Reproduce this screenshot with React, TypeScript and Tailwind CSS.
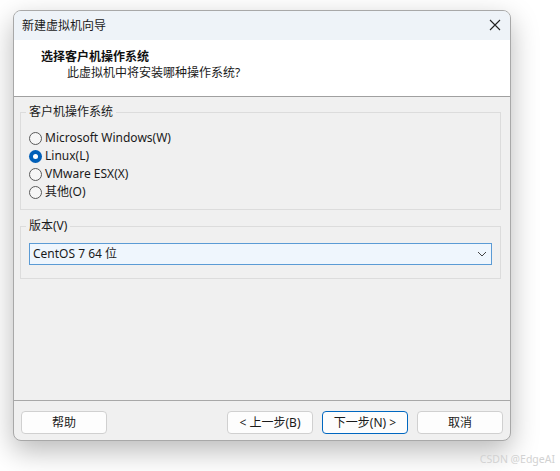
import React from "react";

const FONT = {
  fontFamily: '"Noto Sans", "Noto Sans CJK SC", sans-serif',
};

function Radio({ label, checked }: { label: string; checked?: boolean }) {
  return (
    <label className="flex h-[18px] items-center">
      {checked ? (
        <span className="flex h-[13px] w-[13px] items-center justify-center rounded-full bg-[#005fb8]">
          <span className="h-[5px] w-[5px] rounded-full bg-white" />
        </span>
      ) : (
        <span className="h-[13px] w-[13px] rounded-full border border-[#5a5a5a] bg-[#f6f6f6]" />
      )}
      <span className="ml-[3px] text-[12px] leading-[14px] text-[#1a1a1a]">{label}</span>
    </label>
  );
}

function Btn({ children, primary }: { children: React.ReactNode; primary?: boolean }) {
  return (
    <button
      className={`flex h-[23px] w-[86px] items-center justify-center rounded-[4px] border bg-[#fdfdfd] text-[12px] text-[#1a1a1a] ${
        primary ? "border-[#0067c0]" : "border-[#d0d0d0]"
      }`}
    >
      {children}
    </button>
  );
}

export default function App() {
  return (
    <div className="relative h-[471px] w-[560px] overflow-hidden bg-white" style={FONT}>
      <div className="pl-[13px] pt-[10px]">
        <div className="flex h-[431px] w-[498px] flex-col overflow-hidden rounded-[8px] border border-[#a8a8a8] bg-[#f0f0f0] shadow-[0_10px_28px_rgba(0,0,0,0.28)]">
          {/* Title bar */}
          <div className="flex h-[29px] shrink-0 items-center justify-between bg-[#eef3f8] pl-[8px] pr-[9px]">
            <span className="text-[12px] text-[#1a1a1a]">新建虚拟机向导</span>
            <svg width="12" height="12" viewBox="0 0 12 12" className="mt-[-1px]">
              <path d="M1 1L11 11M11 1L1 11" stroke="#222" strokeWidth="1.1" />
            </svg>
          </div>

          {/* Header */}
          <div className="flex h-[57px] shrink-0 flex-col border-b border-[#a0a0a0] bg-white pl-[27px] pt-[9px]">
            <span className="text-[12px] font-bold leading-[16px] text-[#111]">选择客户机操作系统</span>
            <span className="ml-[26px] text-[12px] leading-[16px] text-[#1a1a1a]">
              此虚拟机中将安装哪种操作系统?
            </span>
          </div>

          {/* Body */}
          <div className="flex flex-1 flex-col pl-[6px] pr-[9px]">
            <fieldset className="mt-[8px] border border-[#dcdcdc] pb-[8px] pl-[8px] pt-[10px]">
              <legend className="ml-[-3px] px-[3px] text-[12px] leading-[14px] text-[#1a1a1a]">客户机操作系统</legend>
              <Radio label="Microsoft Windows(W)" />
              <Radio label="Linux(L)" checked />
              <Radio label="VMware ESX(X)" />
              <Radio label="其他(O)" />
            </fieldset>

            <fieldset className="mt-[9px] border border-[#dcdcdc] px-[8px] pb-[13px] pt-[10px]">
              <legend className="ml-[-3px] px-[3px] text-[12px] leading-[14px] text-[#1a1a1a]">版本(V)</legend>
              <div className="flex h-[22px] items-center justify-between border border-[#5b9bd5] bg-[#eff6fd] pl-[3px] pr-[4px]">
                <span className="text-[12px] text-[#1a1a1a]">CentOS 7 64 位</span>
                <svg width="10" height="6" viewBox="0 0 10 6">
                  <path d="M1 1L5 5L9 1" stroke="#444" strokeWidth="1" fill="none" />
                </svg>
              </div>
            </fieldset>
          </div>

          {/* Footer */}
          <div className="flex h-[40px] shrink-0 items-start border-t border-[#a8a8a8] px-[7px] pt-[10px]">
            <Btn>帮助</Btn>
            <div className="flex-1" />
            <div className="flex gap-[9px]">
              <Btn>&lt; 上一步(B)</Btn>
              <Btn primary>下一步(N) &gt;</Btn>
              <Btn>取消</Btn>
            </div>
          </div>
        </div>
      </div>

      <span className="absolute right-[5px] top-[452px] text-[10.5px] text-[#d2d2d2]">CSDN @EdgeAI</span>
    </div>
  );
}
